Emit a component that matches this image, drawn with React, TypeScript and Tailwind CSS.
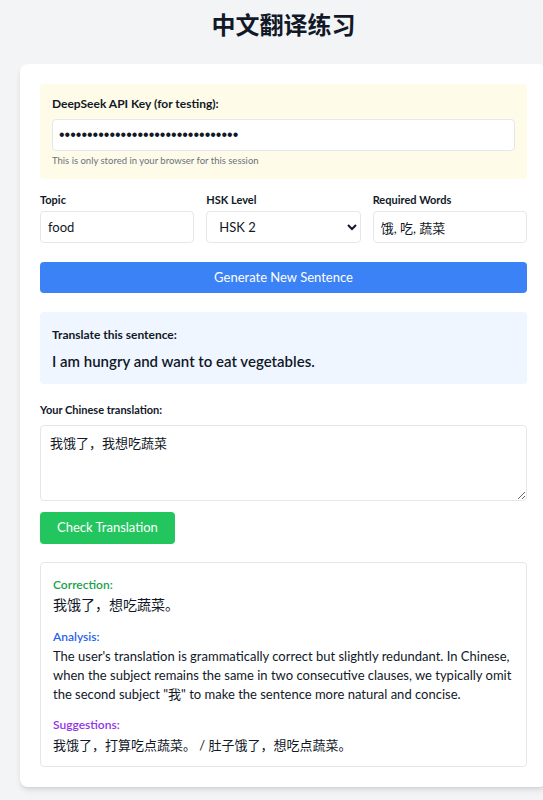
import React, { useState } from 'react';

export default function App() {
  const [apiKey, setApiKey] = useState('sk-0123456789abcdef0123456789abc');
  const [topic, setTopic] = useState('food');
  const [level, setLevel] = useState('2');
  const [words, setWords] = useState('饿, 吃, 蔬菜');
  const [answer, setAnswer] = useState('我饿了，我想吃蔬菜');

  return (
    <div className="min-h-screen overflow-hidden bg-[#f3f4f6] text-[#111827] font-['Lato','Noto_Sans_CJK_SC',sans-serif]">
      <div className="w-[567px] pb-6">
        <h1 className="pt-[9px] text-center text-[24px] leading-8 font-bold">中文翻译练习</h1>

        <div className="mt-[23px] ml-5 w-[527px] rounded-lg bg-white p-5 shadow-md">
          {/* api key */}
          <div className="rounded bg-[#fefce8] px-3 pt-3 pb-[10px]">
            <label className="block text-[12px] font-bold leading-4">DeepSeek API Key (for testing):</label>
            <input
              type="password"
              value={apiKey}
              onChange={(e) => setApiKey(e.target.value)}
              className="mt-[7px] block h-8 w-full rounded border border-[#e5e7eb] bg-white px-[6px] font-['Liberation_Sans',sans-serif] text-[16px] outline-none"
            />
            <p className="mt-[2px] text-[9.5px] leading-4 text-[#6b7280]">This is only stored in your browser for this session</p>
          </div>

          {/* options */}
          <div className="mt-[13px] grid grid-cols-3 gap-3">
            <div>
              <label className="block text-[11px] font-bold leading-4">Topic</label>
              <input
                value={topic}
                onChange={(e) => setTopic(e.target.value)}
                className="mt-[3px] block h-8 w-full rounded border border-[#e5e7eb] px-[7px] text-[13px] outline-none"
              />
            </div>
            <div>
              <label className="block text-[11px] font-bold leading-4">HSK Level</label>
              <select
                value={level}
                onChange={(e) => setLevel(e.target.value)}
                className="mt-[3px] block h-8 w-full rounded border border-[#e5e7eb] bg-white px-2 text-[13px] outline-none"
              >
                <option value="1">HSK 1</option>
                <option value="2">HSK 2</option>
                <option value="3">HSK 3</option>
                <option value="4">HSK 4</option>
                <option value="5">HSK 5</option>
                <option value="6">HSK 6</option>
              </select>
            </div>
            <div>
              <label className="block text-[11px] font-bold leading-4">Required Words</label>
              <input
                value={words}
                onChange={(e) => setWords(e.target.value)}
                className="mt-[3px] block h-8 w-full rounded border border-[#e5e7eb] px-[7px] text-[13px] outline-none"
              />
            </div>
          </div>

          <button className="mt-[19px] block h-[31px] w-full rounded bg-[#3b82f6] text-[13px] text-white">
            Generate New Sentence
          </button>

          {/* sentence */}
          <div className="mt-[19px] rounded bg-[#eff6ff] px-3 pt-[13px] pb-[11px]">
            <p className="text-[12px] font-bold leading-5">Translate this sentence:</p>
            <p className="mt-[4px] text-[15px] font-semibold leading-6">I am hungry and want to eat vegetables.</p>
          </div>

          {/* answer */}
          <div className="mt-[18px]">
            <label className="block text-[11px] font-bold leading-4">Your Chinese translation:</label>
            <textarea
              value={answer}
              onChange={(e) => setAnswer(e.target.value)}
              className="mt-[7px] block h-[76px] w-full rounded border border-[#e5e7eb] px-[9px] py-2 text-[13px] outline-none"
            />
          </div>

          <button className="mt-[11px] block h-8 rounded bg-[#22c55e] px-[17px] text-[13px] text-white">
            Check Translation
          </button>

          {/* feedback */}
          <div className="mt-[18px] rounded border border-[#e5e7eb] px-3 pt-[12px] pb-[11px]">
            <p className="text-[12px] font-semibold leading-5 text-[#16a34a]">Correction:</p>
            <p className="text-[14px] leading-5">我饿了，想吃蔬菜。</p>

            <p className="mt-[12px] text-[12px] font-semibold leading-5 text-[#2563eb]">Analysis:</p>
            <p className="text-[13px] leading-[19px]">
              The user's translation is grammatically correct but slightly redundant. In Chinese, when the subject remains the same in two consecutive clauses, we typically omit the second subject "我" to make the sentence more natural and concise.
            </p>

            <p className="mt-[11px] text-[12px] font-semibold leading-5 text-[#9333ea]">Suggestions:</p>
            <p className="text-[13px] leading-5">我饿了，打算吃点蔬菜。 / 肚子饿了，想吃点蔬菜。</p>
          </div>
        </div>
      </div>
    </div>
  );
}
